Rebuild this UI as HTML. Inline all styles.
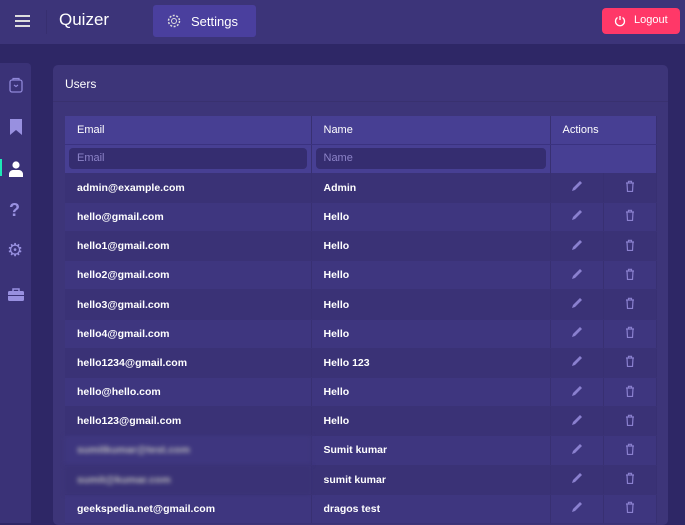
<!DOCTYPE html>
<html><head><style>
*{box-sizing:border-box;margin:0;padding:0}
body{width:685px;height:515px;overflow:hidden;background:#2e2766;font-family:"Liberation Sans",sans-serif;color:#fff;position:relative}
.hdr{position:absolute;left:0;top:0;width:685px;height:44px;background:#3c3479}
.sb{position:absolute;left:0;top:63px;width:31px;height:460px;background:#3a3277;border-radius:0 4px 0 0}
.card{position:absolute;left:53px;top:65px;width:615px;height:460px;background:#3d3579;border-radius:5px}
table{position:absolute;left:65px;top:116px;width:591px;border-collapse:collapse;font-size:11px;table-layout:fixed}
td,th{height:29.2px;padding:0 12px;text-align:left;border-right:1px solid #383072}
th{background:#473f93;font-weight:normal;height:28px;border-bottom:1px solid #3a3280}
tr.f td{background:#473f93;padding:0 4px}
.in{height:21px;background:#352d70;border-radius:4px;color:#8c83c8;padding:4px 8px;font-size:11px}
tr.r td{font-weight:bold;font-size:10.5px;border-bottom:1px solid #3a3276}
tr.r:nth-child(odd) td{background:#3a3276}
tr.r:nth-child(even) td{background:#3e367f}
.ic{text-align:center;padding:0}
.blur{filter:blur(2px);color:#bbb}
</style></head><body>
<div class="hdr">
 <div style="position:absolute;left:15px;top:15px;width:15px;height:2px;background:#ddd;box-shadow:0 5px 0 #ddd,0 10px 0 #ddd"></div>
 <div style="position:absolute;left:46px;top:10px;width:1px;height:24px;background:#372f70"></div>
 <div style="position:absolute;left:59px;top:10px;font-size:17px">Quizer</div>
 <div style="position:absolute;left:153px;top:5px;width:103px;height:32px;background:#4a3f9e;border-radius:3px;font-size:13px;padding:9px 0 0 38px">Settings
  <svg style="position:absolute;left:14px;top:9px" width="14" height="14" viewBox="0 0 14 14"><circle cx="7" cy="7" r="5.5" fill="none" stroke="#ddd" stroke-width="1.5" stroke-dasharray="2 1.5"/><circle cx="7" cy="7" r="2.5" fill="none" stroke="#ddd"/></svg></div>
 <div style="position:absolute;left:602px;top:8px;width:78px;height:26px;background:#ff3868;border-radius:4px;font-size:11px;padding:6px 0 0 32px">Logout
  <svg style="position:absolute;left:12px;top:7px" width="12" height="12" viewBox="0 0 12 12"><path d="M3.5 2.5A4.5 4.5 0 1 0 8.5 2.5M6 1v4" fill="none" stroke="#fff" stroke-width="1.3"/></svg></div>
</div>
<div class="sb">
 <svg style="position:absolute;left:9px;top:14px" width="14" height="16" viewBox="0 0 14 16"><rect x="1" y="3" width="12" height="12" rx="2" fill="none" stroke="#8f87d8" stroke-width="1.3"/><path d="M4 3V1.5h6V3M5 8l2 1.5L9 8" fill="none" stroke="#8f87d8" stroke-width="1.2"/></svg>
 <svg style="position:absolute;left:10px;top:56px" width="12" height="16" viewBox="0 0 12 16"><path d="M0 0h12v16l-6-5-6 5z" fill="#9890e0"/></svg>
 <div style="position:absolute;left:0;top:96px;width:2px;height:17px;background:#1de9b6"></div>
 <svg style="position:absolute;left:9px;top:98px" width="14" height="16" viewBox="0 0 14 16"><circle cx="7" cy="4" r="3.6" fill="#fff"/><path d="M0 16v-3c0-2 2-4 4-4h6c2 0 4 2 4 4v3z" fill="#fff"/></svg>
 <div style="position:absolute;left:9px;top:137px;font-size:18px;font-weight:bold;color:#9890e0">?</div>
 <div style="position:absolute;left:7px;top:177px;font-size:18px;color:#9890e0">⚙</div>
 <svg style="position:absolute;left:8px;top:225px" width="16" height="13" viewBox="0 0 16 13"><path d="M5 3V1h6v2" fill="none" stroke="#9890e0" stroke-width="1.5"/><rect x="0" y="3" width="16" height="10" rx="1.5" fill="#9890e0"/><rect x="0" y="7" width="16" height="1" fill="#3a3277"/></svg>
</div>
<div class="card">
 <div style="position:absolute;left:12px;top:12px;font-size:12px">Users</div>
 <div style="position:absolute;left:0;top:36px;width:615px;height:1px;background:#39316f"></div>
</div>
<table>
<colgroup><col style="width:246px"><col style="width:239px"><col style="width:53px"><col style="width:53px"></colgroup>
<tr><th>Email</th><th>Name</th><th colspan="2">Actions</th></tr>
<tr class="f"><td><div class="in">Email</div></td><td><div class="in">Name</div></td><td colspan="2"></td></tr>
<tr class="r"><td>admin@example.com</td><td>Admin</td><td class="ic"><svg width="12" height="12" viewBox="0 0 12 12"><path d="M1 11l1-3 7-7 2 2-7 7z" fill="#8a80cf"/></svg></td><td class="ic"><svg width="10" height="12" viewBox="0 0 10 12"><path d="M1 3h8M3.5 3V1.3h3V3M2 3l.5 8.5h5L8 3" fill="none" stroke="#8a80cf" stroke-width="1.2"/></svg></td></tr>
</table>
<script>
var d=[["hello@gmail.com","Hello"],["hello1@gmail.com","Hello"],["hello2@gmail.com","Hello"],["hello3@gmail.com","Hello"],["hello4@gmail.com","Hello"],["hello1234@gmail.com","Hello 123"],["hello@hello.com","Hello"],["hello123@gmail.com","Hello"],["sumitkumar@test.com","Sumit kumar",1],["sumit@kumar.com","sumit kumar",1],["geekspedia.net@gmail.com","dragos test"]];
var t=document.querySelector('table tbody')||document.querySelector('table');var last=t.rows[2];
d.forEach(function(x){var r=last.cloneNode(true);r.cells[0].textContent=x[0];if(x[2])r.cells[0].className='blur';r.cells[1].textContent=x[1];last.parentNode.appendChild(r);});
</script>
</body></html>
